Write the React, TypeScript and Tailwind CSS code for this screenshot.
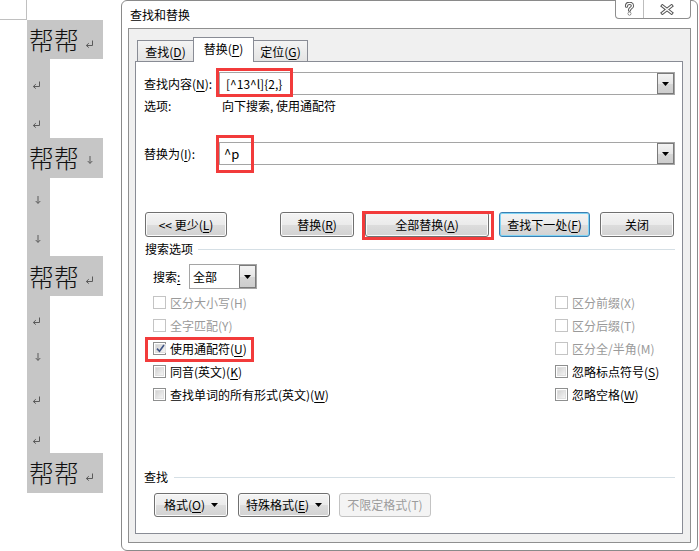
import React from 'react';

const cjk = "font-['Noto_Sans_CJK_SC','Noto_Sans',sans-serif]";

type Mark = 'ret' | 'down';

const docLines: { wide: boolean; mark: Mark }[] = [
  { wide: true, mark: 'ret' },
  { wide: false, mark: 'ret' },
  { wide: false, mark: 'ret' },
  { wide: true, mark: 'down' },
  { wide: false, mark: 'down' },
  { wide: false, mark: 'down' },
  { wide: true, mark: 'ret' },
  { wide: false, mark: 'ret' },
  { wide: false, mark: 'down' },
  { wide: false, mark: 'ret' },
  { wide: false, mark: 'ret' },
  { wide: true, mark: 'ret' },
];

function ReturnMark({ className }: { className?: string }) {
  return (
    <svg width="9" height="8" viewBox="0 0 9 8" className={className}>
      <path d="M7.5 0.5V5.5H1.5" fill="none" stroke="#5a5a5a" strokeWidth="1" />
      <path d="M3.8 3.2L1.3 5.5L3.8 7.6" fill="none" stroke="#5a5a5a" strokeWidth="1" />
    </svg>
  );
}

function DownMark({ className }: { className?: string }) {
  return (
    <svg width="6" height="8" viewBox="0 0 6 8" className={className}>
      <path d="M3 0V7.3" fill="none" stroke="#5a5a5a" strokeWidth="1" />
      <path d="M0.7 5L3 7.4L5.3 5" fill="none" stroke="#5a5a5a" strokeWidth="1" />
    </svg>
  );
}

function Doc() {
  return (
    <div className="w-[121px] shrink-0 bg-white">
      {/* page corner mark */}
      <div className="w-[27px] h-[20px] border-r border-b border-[#c0c0c0]" />
      <div className="ml-[27px] flex flex-col">
        {docLines.map((l, i) =>
          l.wide ? (
            <div key={i} className="w-[76px] h-[39.4px] bg-[#c6c6c6] flex items-center pl-[2px]">
              <span className="text-[25px] leading-none font-light text-[#111]">帮帮</span>
              {l.mark === 'ret' ? (
                <ReturnMark className="ml-[6px] mt-[8px]" />
              ) : (
                <DownMark className="ml-[8px] mt-[5px]" />
              )}
            </div>
          ) : (
            <div key={i} className="w-[23px] h-[39.4px] bg-[#c6c6c6] flex items-center">
              {l.mark === 'ret' ? (
                <ReturnMark className="ml-[5px] mt-[12px]" />
              ) : (
                <DownMark className="ml-[8px] mt-[5px]" />
              )}
            </div>
          )
        )}
      </div>
    </div>
  );
}

function Tri() {
  return (
    <svg width="7" height="4" viewBox="0 0 7 4">
      <path d="M0 0H7L3.5 4Z" fill="#000" />
    </svg>
  );
}

function DropBtn() {
  return (
    <div className="w-[17px] h-full shrink-0 border border-[#7a7a7a] bg-[linear-gradient(to_bottom,#f3f3f3,#e6e6e6_50%,#d6d6d6_51%,#cdcdcd)] flex items-center justify-center">
      <Tri />
    </div>
  );
}

function HelpIcon() {
  return (
    <svg width="11" height="14" viewBox="0 0 11 14">
      <g fill="none" strokeLinecap="round">
        <path d="M2.5 4.2C2.5 2 3.8 1.3 5.5 1.3C7.3 1.3 8.5 2.3 8.5 4C8.5 5.7 5.5 6 5.5 8.2" stroke="#555" strokeWidth="3.2" />
        <circle cx="5.5" cy="11.6" r="0.3" stroke="#555" strokeWidth="3.2" />
        <path d="M2.5 4.2C2.5 2 3.8 1.3 5.5 1.3C7.3 1.3 8.5 2.3 8.5 4C8.5 5.7 5.5 6 5.5 8.2" stroke="#fff" strokeWidth="1.3" />
        <circle cx="5.5" cy="11.6" r="0.3" stroke="#fff" strokeWidth="1.3" />
      </g>
    </svg>
  );
}

function CloseIcon() {
  return (
    <svg width="14" height="11" viewBox="0 0 14 11">
      <g fill="none" strokeLinecap="square">
        <path d="M2.5 2L11.5 9M11.5 2L2.5 9" stroke="#555" strokeWidth="3.4" />
        <path d="M2.5 2L11.5 9M11.5 2L2.5 9" stroke="#fff" strokeWidth="1.4" />
      </g>
    </svg>
  );
}

function Btn({
  children,
  className,
  def,
  disabled,
  box,
}: {
  children: React.ReactNode;
  className: string;
  def?: boolean;
  disabled?: boolean;
  box?: boolean;
}) {
  const skin = disabled
    ? 'border-[#c3c3c3] bg-[#f4f4f4] text-[#9c9c9c]'
    : def
    ? 'border-[#3c7fb1] bg-[linear-gradient(to_bottom,#f4f4f4,#ebebeb_50%,#dddddd_51%,#d2d2d2)] shadow-[inset_0_0_0_1px_#7fd4f5] text-black'
    : 'border-[#707070] bg-[linear-gradient(to_bottom,#f4f4f4,#ebebeb_50%,#dddddd_51%,#d2d2d2)] shadow-[inset_0_0_0_1px_#fbfbfb] text-black';
  return (
    <div className={`relative shrink-0 border rounded-[3px] flex items-center justify-center ${skin} ${className}`}>
      {children}
      {box && <span className="absolute left-[-4px] top-[-2px] w-[132px] h-[29px] border-[3px] border-[#f23b3b]" />}
    </div>
  );
}

function Check({ checked, disabled }: { checked?: boolean; disabled?: boolean }) {
  if (disabled) {
    return <span className="w-[13px] h-[13px] shrink-0 border border-[#c4c4c4] bg-white" />;
  }
  return (
    <span className="w-[13px] h-[13px] shrink-0 border border-[#8e8f8f] bg-white p-px flex">
      <span className="flex-1 bg-[linear-gradient(135deg,#d2d2d2,#f4f4f4)] border border-[#e0e0e0] flex items-center justify-center">
        {checked && (
          <svg width="9" height="9" viewBox="0 0 9 9">
            <path d="M1 4.6L3.5 7.3L8 1" fill="none" stroke="#3f5384" strokeWidth="1.6" />
          </svg>
        )}
      </span>
    </span>
  );
}

function Opt({
  label,
  disabled,
  checked,
  box,
}: {
  label: React.ReactNode;
  disabled?: boolean;
  checked?: boolean;
  box?: boolean;
}) {
  return (
    <div className="relative h-[23px] flex items-center gap-[4px]">
      <Check checked={checked} disabled={disabled} />
      <span className={disabled ? 'text-[#9a9a9a]' : 'text-black'}>{label}</span>
      {box && <span className="absolute left-[-8px] top-0 w-[109px] h-[25px] border-[3px] border-[#f23b3b]" />}
    </div>
  );
}

function Dialog() {
  return (
    <div className={`w-[577px] h-[551px] shrink-0 flex flex-col border border-[#8a8a8a] rounded-[6px] bg-white text-[12px] leading-[16px] ${cjk}`}>
      {/* title bar */}
      <div className="h-[27px] shrink-0 flex items-start justify-between pl-[8px] pr-[6px]">
        <span className="mt-[6px] text-black">查找和替换</span>
        <div className="-mt-px flex h-[19px] border border-t-0 border-[#8e8e8e] rounded-b-[4px] bg-white">
          <div className="w-[28px] flex items-center justify-center border-r border-[#bdbdbd]">
            <HelpIcon />
          </div>
          <div className="w-[46px] flex items-center justify-center">
            <CloseIcon />
          </div>
        </div>
      </div>

      {/* frame */}
      <div className="flex-1 flex px-[6px] pb-[7px]">
        <div className="flex-1 flex flex-col border border-[#8f8f8f] bg-[#f0f0f0] pt-[8px] pl-[6px] pr-[7px] pb-[8px]">
          {/* tabs */}
          <div className="h-[24px] flex items-end pl-[2px]">
            <div className="w-[56px] h-[21px] border-l border-t border-[#898c95] bg-[linear-gradient(to_bottom,#f4f4f4,#e4e4e4)] flex items-center justify-center pt-px">
              查找(<u className="underline-offset-2">D</u>)
            </div>
            <div className="relative z-10 w-[61px] h-[25px] -mb-px border-l border-t border-r border-[#898c95] bg-white flex items-center justify-center pb-[2px]">
              替换(<u className="underline-offset-2">P</u>)
            </div>
            <div className="w-[54px] h-[21px] border-t border-r border-[#898c95] bg-[linear-gradient(to_bottom,#f4f4f4,#e4e4e4)] flex items-center justify-center pt-px">
              定位(<u className="underline-offset-2">G</u>)
            </div>
          </div>

          {/* panel */}
          <div className="flex-1 flex flex-col bg-white border border-[#898c95] pl-[8px] pr-[7px] pt-[10px] pb-[16px]">
            <div className="h-[23px] flex items-center">
              <span className="w-[75px] shrink-0">
                查找内容(<u className="underline-offset-2">N</u>):
              </span>
              <div className="relative flex-1 h-[23px] border border-[#a5a5a5] flex items-center">
                <span className="flex-1 pl-[6px]">[^13^l]{'{'}2,{'}'}</span>
                <DropBtn />
                <span className="absolute left-[-4px] top-[-5px] w-[77px] h-[29px] border-[3px] border-[#f23b3b]" />
              </div>
            </div>

            <div className="mt-[3px] flex">
              <span className="w-[78px] shrink-0">选项:</span>
              <span>向下搜索, 使用通配符</span>
            </div>

            <div className="mt-[28px] h-[23px] flex items-center">
              <span className="w-[75px] shrink-0">
                替换为(<u className="underline-offset-2">I</u>):
              </span>
              <div className="relative flex-1 h-[23px] border border-[#a5a5a5] flex items-center">
                <span className="flex-1 pl-[4px] text-[13px]">^p</span>
                <DropBtn />
                <span className="absolute left-[-4px] top-[-8px] w-[38px] h-[38px] border-[3px] border-[#f23b3b]" />
              </div>
            </div>

            {/* action buttons */}
            <div className="mt-[47px] flex items-center">
              <Btn className="ml-[1px] w-[82px] h-[25px]">
                &lt;&lt; 更少(<u className="underline-offset-2">L</u>)
              </Btn>
              <div className="flex-1" />
              <div className="flex items-center gap-[10px] mr-[1px]">
                <Btn className="w-[74px] h-[25px]">
                  替换(<u className="underline-offset-2">R</u>)
                </Btn>
                <Btn className="ml-px w-[124px] h-[25px]" box>
                  全部替换(<u className="underline-offset-2">A</u>)
                </Btn>
                <Btn className="w-[91px] h-[25px]" def>
                  查找下一处(<u className="underline-offset-2">F</u>)
                </Btn>
                <Btn className="w-[74px] h-[25px]">关闭</Btn>
              </div>
            </div>

            <div className="mt-[4px] ml-[1px] flex items-center gap-[5px]">
              <span>搜索选项</span>
              <span className="flex-1 h-px bg-[#d5dfe5]" />
            </div>

            <div className="mt-[7px] ml-[9px] h-[25px] flex items-center">
              <span className="w-[36px] shrink-0">
                搜索<u className="underline-offset-2">:</u>
              </span>
              <div className="w-[68px] h-[25px] border border-[#a5a5a5] bg-white flex items-center">
                <span className="flex-1 pl-[3px]">全部</span>
                <DropBtn />
              </div>
            </div>

            <div className="mt-[2px] ml-[9px] flex">
              <div className="w-[402px] flex flex-col">
                <Opt disabled label="区分大小写(H)" />
                <Opt disabled label="全字匹配(Y)" />
                <Opt checked box label={<>使用通配符(<u className="underline-offset-2">U</u>)</>} />
                <Opt label={<>同音(英文)(<u className="underline-offset-2">K</u>)</>} />
                <Opt label={<>查找单词的所有形式(英文)(<u className="underline-offset-2">W</u>)</>} />
              </div>
              <div className="flex flex-col">
                <Opt disabled label="区分前缀(X)" />
                <Opt disabled label="区分后缀(T)" />
                <Opt disabled label="区分全/半角(M)" />
                <Opt label={<>忽略标点符号(<u className="underline-offset-2">S</u>)</>} />
                <Opt label={<>忽略空格(<u className="underline-offset-2">W</u>)</>} />
              </div>
            </div>

            <div className="mt-auto flex items-center gap-[6px]">
              <span>查找</span>
              <span className="flex-1 h-px bg-[#d5dfe5]" />
            </div>

            <div className="mt-[8px] ml-[10px] flex items-center">
              <Btn className="w-[74px] h-[24px] gap-[6px]">
                <span>
                  格式(<u className="underline-offset-2">O</u>)
                </span>
                <Tri />
              </Btn>
              <Btn className="ml-[10px] w-[92px] h-[24px] gap-[6px]">
                <span>
                  特殊格式(<u className="underline-offset-2">E</u>)
                </span>
                <Tri />
              </Btn>
              <Btn className="ml-[9px] w-[92px] h-[24px]" disabled>
                不限定格式(T)
              </Btn>
            </div>
          </div>
        </div>
      </div>
    </div>
  );
}

export default function App() {
  return (
    <div className={`w-[699px] h-[551px] overflow-hidden bg-white flex ${cjk}`}>
      <Doc />
      <Dialog />
    </div>
  );
}
